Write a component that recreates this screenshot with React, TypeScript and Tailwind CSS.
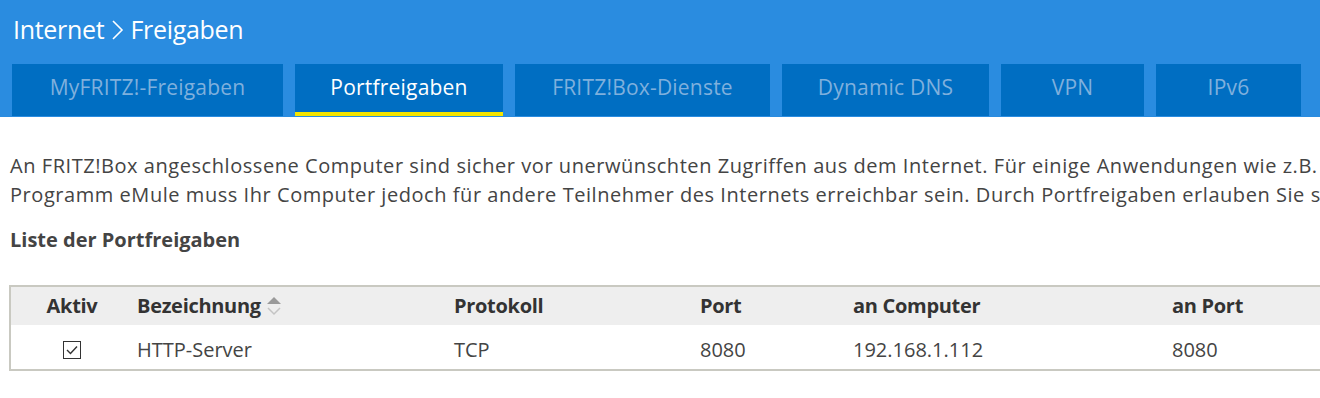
const tabs = [
  { label: "MyFRITZ!-Freigaben", w: "w-[271px]" },
  { label: "Portfreigaben", w: "w-[208px]", active: true },
  { label: "FRITZ!Box-Dienste", w: "w-[255px]" },
  { label: "Dynamic DNS", w: "w-[207px]" },
  { label: "VPN", w: "w-[143px]" },
  { label: "IPv6", w: "w-[145px]" },
];

const cols = "grid grid-cols-[122px_317px_246px_153px_319px_1fr]";

const SortIcon = () => (
  <svg width="18" height="22" viewBox="0 0 18 22" className="ml-1">
    <path d="M2 9 L9 2 L16 9 Z" fill="#9a9a9a" />
    <path d="M3 13 L9 19 L15 13" fill="none" stroke="#c4c4c4" strokeWidth="1.5" />
  </svg>
);

const App = () => {
  return (
    <div className="w-[1320px] h-[398px] overflow-hidden bg-white font-['Open_Sans','Noto_Sans',sans-serif] text-[#444]">
      <div className="bg-[#2a8ce0] h-[117px]">
        <div className="flex items-center h-[60px] pl-[13px] text-white text-[25px] tracking-[-0.3px]">
          <span>Internet</span>
          <svg width="20" height="24" viewBox="0 0 20 24" className="mx-[3px]">
            <path d="M6 3 L15 12 L6 21" fill="none" stroke="white" strokeWidth="1.6" />
          </svg>
          <span>Freigaben</span>
        </div>
        <div className="flex gap-3 pl-3 mt-1">
          {tabs.map((t) => (
            <div
              key={t.label}
              className={`${t.w} h-[52px] bg-[#006ec2] flex items-center justify-center text-[21px] tracking-[0.2px] ${
                t.active ? "text-white border-b-[4px] border-[#f5e500] pb-[1px]" : "text-[#7fb0dd] pb-[5px]"
              }`}
            >
              {t.label}
            </div>
          ))}
        </div>
      </div>

      <div className="pl-[10px] pt-[34px] text-[20px] leading-[29px] whitespace-nowrap tracking-[0.55px]">
        <p>
          An FRITZ!Box angeschlossene Computer sind sicher vor unerwünschten Zugriffen aus dem Internet. Für einige Anwendungen wie z.B.
        </p>
        <p>
          Programm eMule muss Ihr Computer jedoch für andere Teilnehmer des Internets erreichbar sein. Durch Portfreigaben erlauben Sie s
        </p>
        <h2 className="font-bold text-[#444] mt-[16px] tracking-[0px]">Liste der Portfreigaben</h2>
      </div>

      <div className="ml-[9px] mt-[31px] w-[1330px] border-2 border-[#c9c9c1] text-[20px] whitespace-nowrap">
        <div className={`${cols} h-[38px] bg-[#eeeeee] items-center font-bold text-[#333] tracking-[-0.3px] pb-[1px]`}>
          <div className="text-center">Aktiv</div>
          <div className="pl-1 flex items-center">
            Bezeichnung
            <SortIcon />
          </div>
          <div className="pl-1">Protokoll</div>
          <div className="pl-1">Port</div>
          <div className="pl-1">an Computer</div>
          <div className="pl-1">an Port</div>
        </div>
        <div className={`${cols} h-[44px] items-center pt-[6px]`}>
          <div className="flex justify-center">
            <span className="w-[18px] h-[18px] border border-[#333] flex items-center justify-center">
              <svg width="14" height="12" viewBox="0 0 14 12">
                <path d="M2 6 L5.5 9.5 L12 2.5" fill="none" stroke="#333" strokeWidth="1.4" />
              </svg>
            </span>
          </div>
          <div className="pl-1">HTTP-Server</div>
          <div className="pl-1">TCP</div>
          <div className="pl-1">8080</div>
          <div className="pl-1">192.168.1.112</div>
          <div className="pl-1">8080</div>
        </div>
      </div>
    </div>
  );
};

export default App;
